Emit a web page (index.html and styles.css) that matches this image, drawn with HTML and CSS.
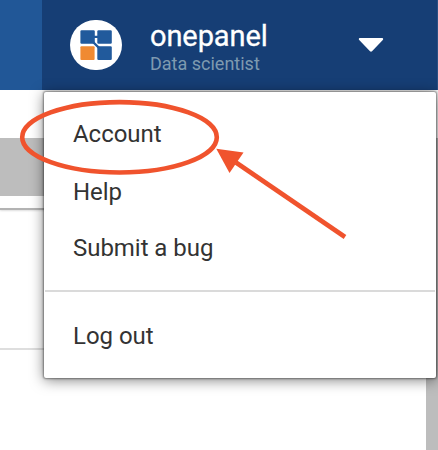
FILE: index.html
```html
<!DOCTYPE html>
<html lang="en">
<head>
<meta charset="utf-8">
<title>Onepanel</title>
<link rel="stylesheet" href="styles.css">
</head>
<body>
<header class="topbar">
  <div class="user">
    <svg class="avatar" viewBox="0 0 52 50" aria-hidden="true">
      <rect width="52" height="50" rx="25" fill="#fff"/>
      <g fill="#215a9c">
        <rect x="10.4" y="10.2" width="14.4" height="13.6" rx="1.2"/>
        <rect x="27.3" y="10.2" width="14.5" height="13.6" rx="1.2"/>
        <rect x="27.3" y="26.2" width="14.5" height="13.8" rx="1.2"/>
      </g>
      <rect x="10.4" y="26.2" width="14.2" height="13.8" rx="1" fill="#f08a32"/>
      <path d="M24 16.9h4M23 22l6 5.8" stroke="#215a9c" stroke-width="2.4" fill="none"/>
    </svg>
    <div class="identity">
      <div class="name">onepanel</div>
      <div class="role">Data scientist</div>
    </div>
    <svg class="caret" viewBox="0 0 26 16" aria-hidden="true">
      <path d="M1.7 1h22.6c.9 0 1.2 1.3.5 2L14 14.2c-.6.6-1.4.6-2 0L1.2 3C.5 2.3.8 1 1.7 1z" fill="#fff"/>
    </svg>
  </div>
</header>
<main class="page">
  <div class="content">
    <div class="band"></div>
    <div class="panel-edge"></div>
    <div class="row-edge"></div>
  </div>
  <div class="scrollbar"></div>
</main>
<nav class="menu">
  <a class="item account">Account</a>
  <a class="item help">Help</a>
  <a class="item">Submit a bug</a>
  <div class="divider"></div>
  <a class="item logout">Log out</a>
</nav>
<svg class="annotation" viewBox="0 0 438 450" aria-hidden="true">
  <ellipse cx="119.5" cy="137.3" rx="97.3" ry="35.2" fill="none" stroke="#f0532d" stroke-width="4.6"/>
  <path d="M236 162.5L345 237" stroke="#f0532d" stroke-width="4.6"/>
  <path d="M216.3 148.8L243.5 152.5 229.5 173z" fill="#f0532d"/>
</svg>
</body>
</html>
```

FILE: styles.css
```css
* { box-sizing: border-box; }
body {
  margin: 0;
  height: 450px;
  display: flex;
  flex-direction: column;
  position: relative;
  overflow: hidden;
  background: #fff;
  font-family: Roboto, sans-serif;
}
.topbar {
  height: 90px;
  padding-left: 42px;
  background: #215797;
}
.user {
  height: 90px;
  display: flex;
  align-items: flex-start;
  padding: 19px 53px 0 28px;
  background: #163e75;
  border-right: 1px solid #2a4f82;
}
.avatar { width: 52px; height: 50px; margin-top: 1px; }
.identity { margin-left: 28px; flex: 1; }
.name {
  font-size: 29px;
  line-height: 34px;
  color: #fff;
  letter-spacing: -0.1px;
  -webkit-text-stroke: 0.3px #fff;
}
.role {
  margin-top: 1px;
  font-size: 18px;
  line-height: 20px;
  color: #7e9ab0;
}
.caret { width: 26px; height: 16px; margin-top: 18px; }
.page { flex: 1; display: flex; }
.content { flex: 1; padding-top: 48px; }
.band { height: 58px; background: #bdbdbd; }
.panel-edge {
  height: 2px;
  margin-top: 12px;
  background: #b3b3b3;
  box-shadow: 0 1px 2px #ddd;
}
.row-edge { height: 2px; margin-top: 138px; background: #dedede; }
.scrollbar { width: 12px; margin-top: 48px; background: #bdbdbd; }
.menu {
  position: absolute;
  left: 44px;
  top: 92px;
  width: 392px;
  height: 286px;
  padding-top: 26px;
  background: #fff;
  border-radius: 2px;
  box-shadow: 0 0 2px 1px rgba(0, 0, 0, .4), 0 2px 14px rgba(0, 0, 0, .5);
}
.item {
  display: block;
  padding-left: 29px;
  font-size: 24px;
  line-height: 32px;
  letter-spacing: -0.04px;
  color: #333;
}
.account { margin-bottom: 26px; }
.help { margin-bottom: 24px; }
.divider { height: 2px; margin: 26px 1px 0; background: #dadada; }
.logout { margin-top: 28px; }
.annotation {
  position: absolute;
  left: 0;
  top: 0;
  width: 438px;
  height: 450px;
}
```
